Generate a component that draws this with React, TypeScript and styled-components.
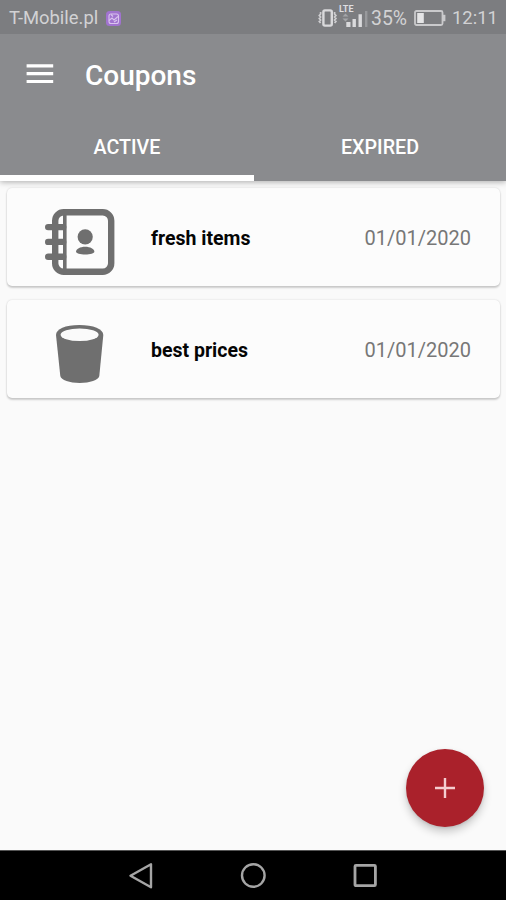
import React from 'react';
import styled, { createGlobalStyle } from 'styled-components';

const GlobalStyle = createGlobalStyle`
  * { box-sizing: border-box; }
  body { margin: 0; background: #fafafa; font-family: Roboto, "Liberation Sans", sans-serif; }
`;

const Screen = styled.div`
  position: relative;
  display: flex;
  flex-direction: column;
  width: 506px;
  height: 900px;
  overflow: hidden;
  background: #fafafa;
`;

const StatusBar = styled.header`
  position: relative;
  z-index: 2;
  display: flex;
  align-items: center;
  height: 34px;
  padding: 2px 9px 0;
  background: #7c7d80;
  color: #d2d2d4;
  font-size: 19px;
  line-height: 30px;
`;

const Carrier = styled.span`
  width: 97px;
  font-size: 18.4px;
  white-space: nowrap;
`;

const StatusGroup = styled.div`
  display: flex;
  align-items: center;
  margin-left: auto;
`;

const Level = styled.span`
  width: 43px;
  padding-top: 1px;
  font-size: 19.4px;
`;

const Clock = styled.span`
  width: 45px;
  margin-left: 6px;
  font-size: 18.4px;
  white-space: nowrap;
`;

const Icon = styled.svg`
  display: block;
  flex: none;
`;

const AppBar = styled.div`
  position: relative;
  z-index: 1;
  height: 147px;
  background: #8a8b8e;
  box-shadow: 0 1px 6px rgba(0, 0, 0, 0.32);
  color: #fff;
`;

const TitleRow = styled.div`
  display: flex;
  align-items: center;
  gap: 31px;
  height: 80px;
  padding-left: 26px;
`;

const Title = styled.h1`
  margin: 0;
  padding-top: 3px;
  font-size: 28px;
  font-weight: 500;
  line-height: 34px;
`;

const Tabs = styled.nav`
  display: grid;
  grid-template-columns: 254px 252px;
  height: 67px;
`;

const Tab = styled.button<{ $active?: boolean }>`
  height: 67px;
  padding: 6px 0 0;
  border: 0;
  border-bottom: 6px solid ${(p) => (p.$active ? '#fff' : 'transparent')};
  background: none;
  color: #fff;
  font-family: inherit;
  font-size: 19.7px;
  font-weight: 500;
`;

const CouponList = styled.main`
  display: flex;
  flex: 1;
  flex-direction: column;
  gap: 14px;
  padding: 7px 6px 0 7px;
`;

const Card = styled.article`
  display: grid;
  grid-template-columns: 144px 1fr auto;
  align-items: center;
  height: 98px;
  padding-right: 29px;
  border-radius: 5px;
  background: #fcfcfc;
  box-shadow: 0 2px 2px rgba(0, 0, 0, 0.17), 0 0 2px rgba(0, 0, 0, 0.16);
`;

const CardIcon = styled.div`
  display: flex;
  justify-content: center;
  padding: 9px 0 0 1px;
`;

const Name = styled.h2`
  margin: 0;
  padding-top: 3px;
  color: #050505;
  font-size: 19.5px;
  font-weight: 700;
  line-height: 24px;
`;

const CouponDate = styled.time`
  padding-top: 2px;
  color: #777;
  font-size: 20px;
  line-height: 24px;
`;

const AddButton = styled.button`
  position: absolute;
  right: 22px;
  bottom: 73px;
  display: flex;
  align-items: center;
  justify-content: center;
  width: 78px;
  height: 78px;
  padding: 0;
  border: 0;
  border-radius: 50%;
  background: #aa212b;
  box-shadow: 0 5px 9px rgba(0, 0, 0, 0.2), 0 1px 3px rgba(0, 0, 0, 0.1);
`;

const SystemNav = styled.footer`
  display: flex;
  align-items: center;
  justify-content: center;
  gap: 85px;
  height: 50px;
  border-top: 1px solid #555;
  background: #000;
`;

const NotificationIcon = () => (
  <Icon width="15" height="15" viewBox="0 0 15 15">
    <rect width="15" height="15" rx="3.5" fill="#a173cf" />
    <g fill="none" stroke="#d9c4ee" strokeWidth="1.1">
      <rect x="3" y="3" width="9.5" height="9.5" rx="2" />
      <path d="M3 9.5 6 7l2 2 4-3.5M5 3.5l2 2M8 11l3-2" />
    </g>
  </Icon>
);

const VibrateIcon = () => (
  <Icon width="20" height="18" viewBox="0 0 20 18">
    <rect x="5.4" y="1.4" width="8.4" height="15.2" rx="1.5" fill="none" stroke="#d9d9db" strokeWidth="2.4" />
    <path d="M2.6 3v2L1.3 6.5 2.6 8 1.3 9.5 2.6 11l-1.3 1.5L2.6 14M16.6 3v2l1.3 1.5L16.6 8l1.3 1.5-1.3 1.5 1.3 1.5-1.3 1.5" fill="none" stroke="#cfcfd1" strokeWidth="1.7" />
  </Icon>
);

const SignalIcon = () => (
  <Icon width="33" height="26" viewBox="0 3 33 26">
    <text x="1" y="9.5" fill="#dedee0" fontFamily="Roboto, sans-serif" fontSize="9" fontWeight="700">LTE</text>
    <path d="M7.5 11.5 4.5 14.5h6ZM7.5 19.5 4.5 16.5h6Z" fill="#a4a5a8" />
    <path d="M8.3 20h4.2v5H8.3ZM14.5 17h3.400v8h-3.400ZM20.500 12.300h3.400V25h-3.400Z" fill="#dadadc" />
    <path d="M27 9h2.400v16H27Z" fill="#98999c" />
  </Icon>
);

const BatteryIcon = () => (
  <Icon width="32" height="16" viewBox="0 0 32 16">
    <rect x="1" y="1" width="27.5" height="14" rx="1.5" fill="none" stroke="#cacacc" strokeWidth="1.8" />
    <path d="M3.2 3h6.6v10H3.2Z" fill="#e5e5e6" />
    <path d="M29 4.8h2.4v6.4H29Z" fill="#cacacc" />
  </Icon>
);

const MenuIcon = () => (
  <Icon width="28" height="20" viewBox="0 0 28 20" role="img" aria-label="Menu">
    <path d="M.6.3h26.6v3.1H.6ZM.6 8.1h26.6v3.1H.6ZM.6 15.9h26.6V19H.6Z" fill="#fff" />
  </Icon>
);

const ContactsIcon = () => (
  <Icon width="70" height="66" viewBox="0 0 70 66">
    <rect x="10.2" y="3.2" width="56" height="59.6" rx="8.5" fill="none" stroke="#6f6f6f" strokeWidth="6.4" />
    <path d="M19.8 4v58" stroke="#6f6f6f" strokeWidth="3.6" />
    <path d="M3.2 18.1h15M3.2 32.9h15M3.2 47.7h15" stroke="#6f6f6f" strokeWidth="6.4" strokeLinecap="round" />
    <circle cx="40.2" cy="27.8" r="7.6" fill="#6f6f6f" />
    <path d="M31 42.8c0-2.8 4.2-5 9.2-5s9.2 2.2 9.2 5c0 1.5-4.2 2.7-9.2 2.7S31 44.3 31 42.8Z" fill="#6f6f6f" />
  </Icon>
);

const BucketIcon = () => (
  <Icon width="48" height="58" viewBox="0.7 0 48 58">
    <path d="M.7 10C.7 4 10 0 24 0s24 4 24 10l-4 41c-.7 4-9.5 7-19.6 7S5.7 55 5 51Z" fill="#6f6f6f" />
    <ellipse cx="24.3" cy="9.7" rx="19" ry="6.3" fill="#fafafa" />
  </Icon>
);

const PlusIcon = () => (
  <Icon width="22" height="22" viewBox="0 0 22 22">
    <path d="M11 1v20M1 11h20" stroke="#f5cdd0" strokeWidth="2.4" />
  </Icon>
);

const BackIcon = () => (
  <Icon width="26" height="28" viewBox="0 0 26 28">
    <path d="M23 2.3v23L2.5 13.7Z" fill="none" stroke="#a5a5a5" strokeWidth="2.4" strokeLinejoin="round" />
  </Icon>
);

const HomeIcon = () => (
  <Icon width="28" height="28" viewBox="0 0 28 28">
    <circle cx="14.3" cy="13.5" r="11.3" fill="none" stroke="#a5a5a5" strokeWidth="2.4" />
  </Icon>
);

const RecentIcon = () => (
  <Icon width="26" height="28" viewBox="0 0 26 28">
    <rect x="3" y="3.3" width="20.4" height="20.4" rx="1" fill="none" stroke="#a5a5a5" strokeWidth="2.8" />
  </Icon>
);

const coupons = [
  { name: 'fresh items', date: '01/01/2020', Picture: ContactsIcon },
  { name: 'best prices', date: '01/01/2020', Picture: BucketIcon },
];

export default function App() {
  return (
    <Screen>
      <GlobalStyle />
      <StatusBar>
        <Carrier>T-Mobile.pl</Carrier>
        <NotificationIcon />
        <StatusGroup>
          <VibrateIcon />
          <SignalIcon />
          <Level>35%</Level>
          <BatteryIcon />
          <Clock>12:11</Clock>
        </StatusGroup>
      </StatusBar>
      <AppBar>
        <TitleRow>
          <MenuIcon />
          <Title>Coupons</Title>
        </TitleRow>
        <Tabs>
          <Tab $active>ACTIVE</Tab>
          <Tab>EXPIRED</Tab>
        </Tabs>
      </AppBar>
      <CouponList>
        {coupons.map(({ name, date, Picture }) => (
          <Card key={name}>
            <CardIcon>
              <Picture />
            </CardIcon>
            <Name>{name}</Name>
            <CouponDate>{date}</CouponDate>
          </Card>
        ))}
      </CouponList>
      <AddButton aria-label="Add coupon">
        <PlusIcon />
      </AddButton>
      <SystemNav>
        <BackIcon />
        <HomeIcon />
        <RecentIcon />
      </SystemNav>
    </Screen>
  );
}
